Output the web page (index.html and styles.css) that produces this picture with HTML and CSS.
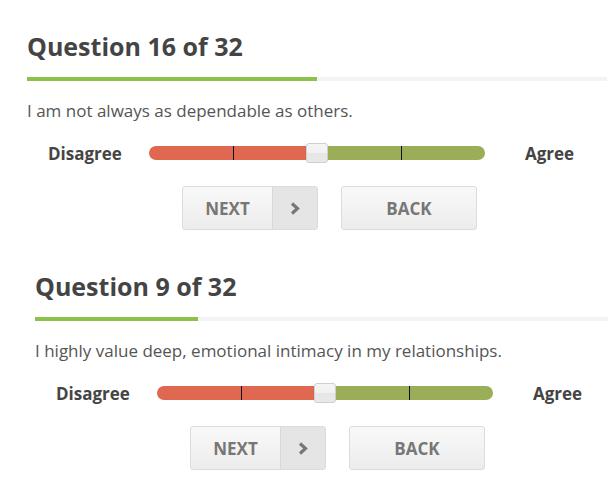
FILE: index.html
```html
<!DOCTYPE html>
<html lang="en">
<head>
  <meta charset="UTF-8" />
  <title>Questions</title>
  <meta name="viewport" content="width=device-width, initial-scale=1.0" />
  <link rel="stylesheet" href="styles.css">
</head>
<body>
  <div class="page">
    <div class="question">
      <h2 class="q-title">Question 16 of 32</h2>
      <div class="progress"><div class="progress-fill" style="width:50%"></div></div>
      <p class="statement">I am not always as dependable as others.</p>
      <div class="scale">
        <span class="label left">Disagree</span>
        <div class="track">
          <div class="track-red"></div>
          <div class="track-green"></div>
          <span class="tick" style="left:25%"></span>
          <span class="tick" style="left:75%"></span>
          <span class="handle" style="left:50%"></span>
        </div>
        <span class="label right">Agree</span>
      </div>
      <div class="buttons">
        <button class="btn next"><span class="btn-text">NEXT</span><span class="btn-arrow"><svg width="10" height="13" viewBox="0 0 10 13"><polyline points="2,1.5 7.5,6.5 2,11.5" fill="none" stroke="#777" stroke-width="3.2"/></svg></span></button>
        <button class="btn back">BACK</button>
      </div>
    </div>

    <div class="question second">
      <h2 class="q-title">Question 9 of 32</h2>
      <div class="progress"><div class="progress-fill" style="width:28.125%"></div></div>
      <p class="statement">I highly value deep, emotional intimacy in my relationships.</p>
      <div class="scale">
        <span class="label left">Disagree</span>
        <div class="track">
          <div class="track-red"></div>
          <div class="track-green"></div>
          <span class="tick" style="left:25%"></span>
          <span class="tick" style="left:75%"></span>
          <span class="handle" style="left:50%"></span>
        </div>
        <span class="label right">Agree</span>
      </div>
      <div class="buttons">
        <button class="btn next"><span class="btn-text">NEXT</span><span class="btn-arrow"><svg width="10" height="13" viewBox="0 0 10 13"><polyline points="2,1.5 7.5,6.5 2,11.5" fill="none" stroke="#777" stroke-width="3.2"/></svg></span></button>
        <button class="btn back">BACK</button>
      </div>
    </div>
  </div>
</body>
</html>
```

FILE: styles.css
```css
html, body {
  margin: 0;
  background: #fff;
  font-family: "Open Sans", sans-serif;
}

.page {
  width: 608px;
  height: 490px;
  overflow: hidden;
}

.question {
  width: 580px;
  margin-left: 27px;
  padding: 30px 0 10px;
}

.question.second { margin-left: 35px; }

.q-title {
  margin: 0;
  font-size: 25px;
  line-height: 32px;
  font-weight: 700;
  color: #444;
}

.progress {
  margin-top: 15px;
  height: 4px;
  background: #f3f3f3;
}

.progress-fill {
  height: 100%;
  background: #8bc34a;
}

.statement {
  margin: 19px 0 0;
  font-size: 17px;
  line-height: 22px;
  color: #555;
}

.scale {
  display: flex;
  align-items: center;
  height: 20px;
  margin-top: 21px;
}

.label {
  font-size: 17px;
  font-weight: 700;
  color: #444;
}

.label.left { width: 101px; padding-left: 21px; }
.label.right { padding-left: 40px; }

.track {
  position: relative;
  display: flex;
  width: 336px;
  height: 14px;
}

.track-red {
  flex: 1;
  background: #e06850;
  border-radius: 7px 0 0 7px;
}

.track-green {
  flex: 1;
  background: #9aae58;
  border-radius: 0 7px 7px 0;
}

.tick {
  position: absolute;
  top: 0;
  width: 1px;
  height: 14px;
  background: #111;
}

.handle {
  position: absolute;
  top: -3px;
  width: 20px;
  height: 18px;
  margin-left: -11px;
  border: 1px solid #cfcfcf;
  border-radius: 3px;
  background: linear-gradient(#f5f5f5 0%, #f1f1f1 50%, #e6e6e6 50%, #e9e9e9 100%);
}

.buttons {
  display: flex;
  gap: 23px;
  margin: 23px 0 0 155px;
}

.btn {
  display: flex;
  align-items: center;
  justify-content: center;
  box-sizing: border-box;
  width: 136px;
  height: 44px;
  padding: 0;
  border: 1px solid #dcdcdc;
  border-radius: 3px;
  background: linear-gradient(#f9f9f9, #ececec);
  font-family: "Open Sans", sans-serif;
  font-size: 17px;
  font-weight: 700;
  color: #777;
}

.btn.next { justify-content: flex-start; overflow: hidden; }

.btn-text {
  width: 89px;
  text-align: center;
}

.btn-arrow {
  display: flex;
  align-items: center;
  justify-content: center;
  flex: 1;
  height: 100%;
  border-left: 1px solid #d8d8d8;
  background: #e5e5e5;
}
```
